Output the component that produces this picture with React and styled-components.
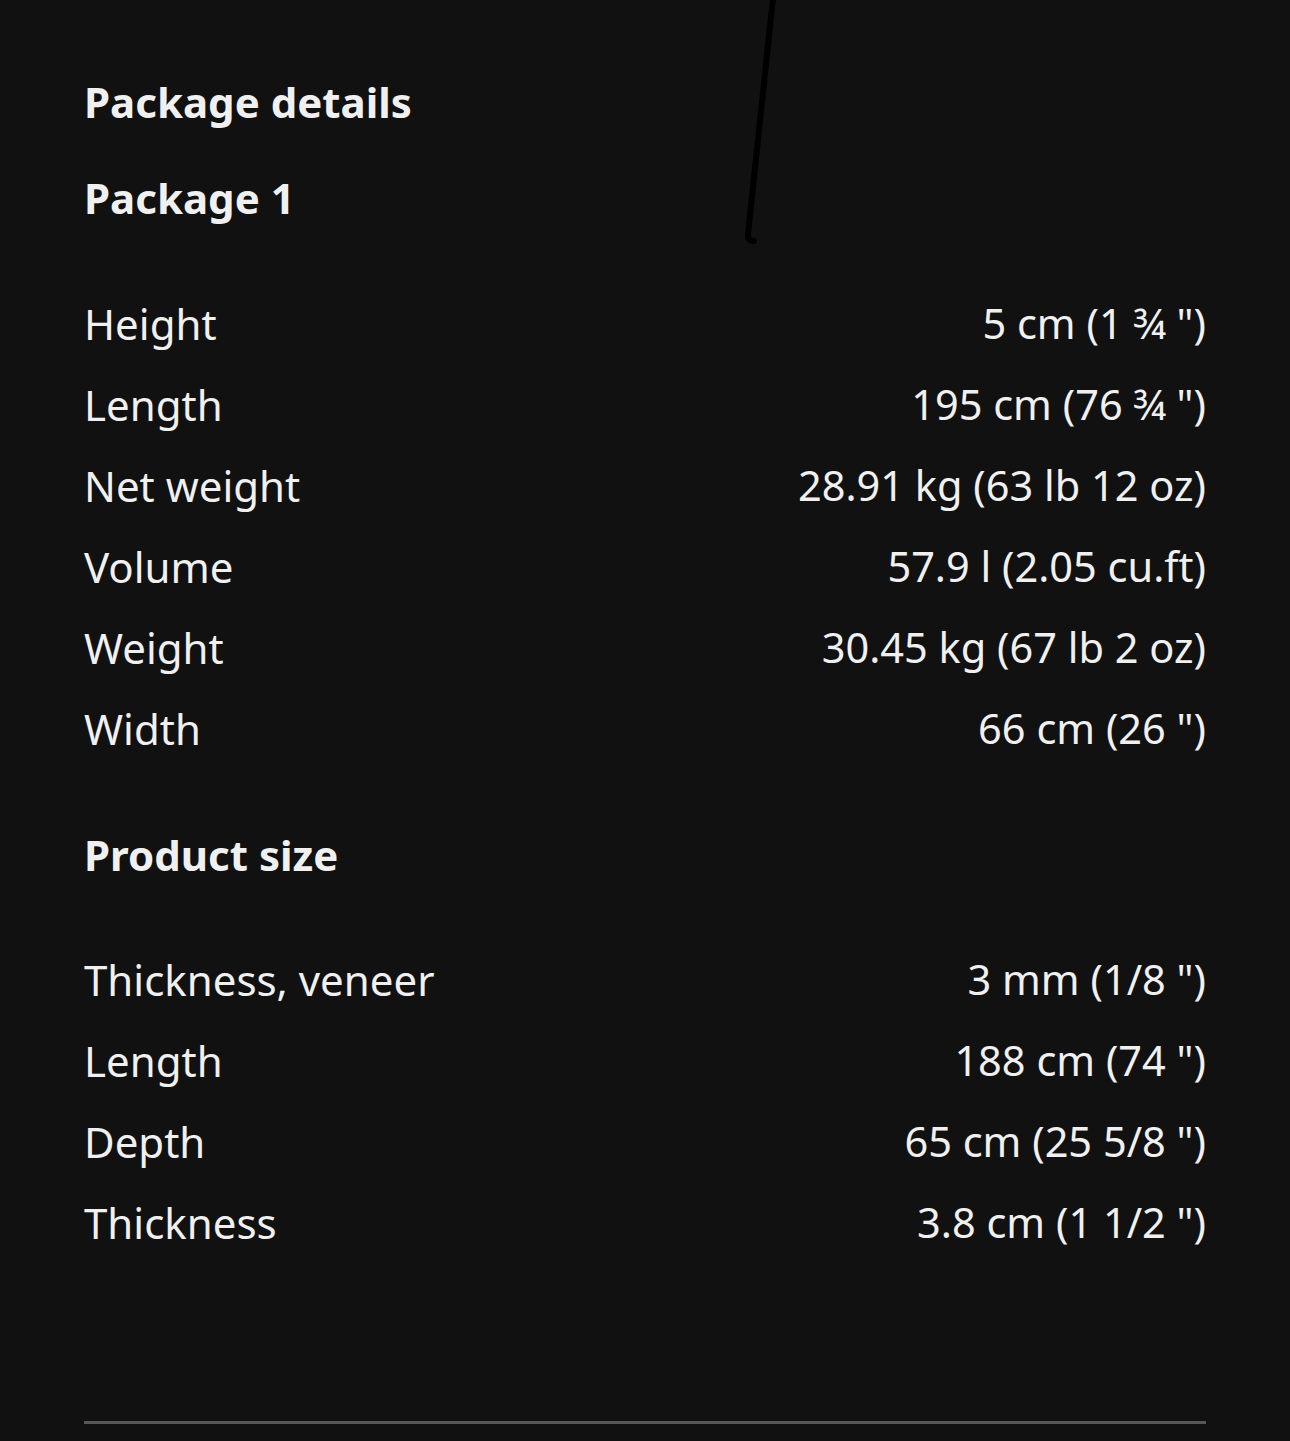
import React from 'react'
import styled, { createGlobalStyle } from 'styled-components'

const Global = createGlobalStyle`
  html, body {
    margin: 0;
    padding: 0;
    background: #111111;
  }
  body {
    font-family: "Noto Sans", "Open Sans", sans-serif;
    color: #f0f0f0;
  }
`

const Page = styled.div`
  position: relative;
  width: 1290px;
  min-height: 1441px;
  box-sizing: border-box;
  padding: 70px 84px 0 84px;
  overflow: hidden;
`

const Title = styled.h2`
  margin: 0;
  font-size: 42px;
  font-weight: 700;
  line-height: 63px;
`

const SubTitle = styled.h3`
  margin: ${p => p.$top}px 0 ${p => p.$bottom}px;
  font-size: 42px;
  font-weight: 700;
  line-height: 63px;
`

const Table = styled.div`
  display: flex;
  flex-direction: column;
`

const Row = styled.div`
  display: flex;
  justify-content: space-between;
  align-items: center;
  height: 81px;
  line-height: 1;
`

const Label = styled.span`
  font-size: 42px;
`
const Value = styled.span`
  font-size: 41.5px;
  text-align: right;
`

const Divider = styled.hr`
  margin: ${p => p.$top}px 0 0 0;
  border: 0;
  height: 3px;
  background: #575757;
`

const Stroke = styled.svg`
  position: absolute;
  left: 730px;
  top: 0;
`

const pkg = [
  ['Height', '5 cm (1 ¾ ")'],
  ['Length', '195 cm (76 ¾ ")'],
  ['Net weight', '28.91 kg (63 lb 12 oz)'],
  ['Volume', '57.9 l (2.05 cu.ft)'],
  ['Weight', '30.45 kg (67 lb 2 oz)'],
  ['Width', '66 cm (26 ")'],
]

const size = [
  ['Thickness, veneer', '3 mm (1/8 ")'],
  ['Length', '188 cm (74 ")'],
  ['Depth', '65 cm (25 5/8 ")'],
  ['Thickness', '3.8 cm (1 1/2 ")'],
]

const Specs = ({ items }) => (
  <Table>
    {items.map(([k, v], i) => (
      <Row key={i}>
        <Label>{k}</Label>
        <Value>{v}</Value>
      </Row>
    ))}
  </Table>
)

export default function App() {
  return (
    <>
      <Global />
      <Page>
        <Stroke width="60" height="250" viewBox="0 0 60 250">
          <path d="M43 -2 L18 234 Q17 241 24 241" fill="none" stroke="#000" strokeWidth="6" strokeLinecap="round" />
        </Stroke>
        <Title>Package details</Title>
        <SubTitle $top={33} $bottom={54}>Package 1</SubTitle>
        <Specs items={pkg} />
        <SubTitle $top={54} $bottom={53}>Product size</SubTitle>
        <Specs items={size} />
        <Divider $top={158} />
      </Page>
    </>
  )
}
